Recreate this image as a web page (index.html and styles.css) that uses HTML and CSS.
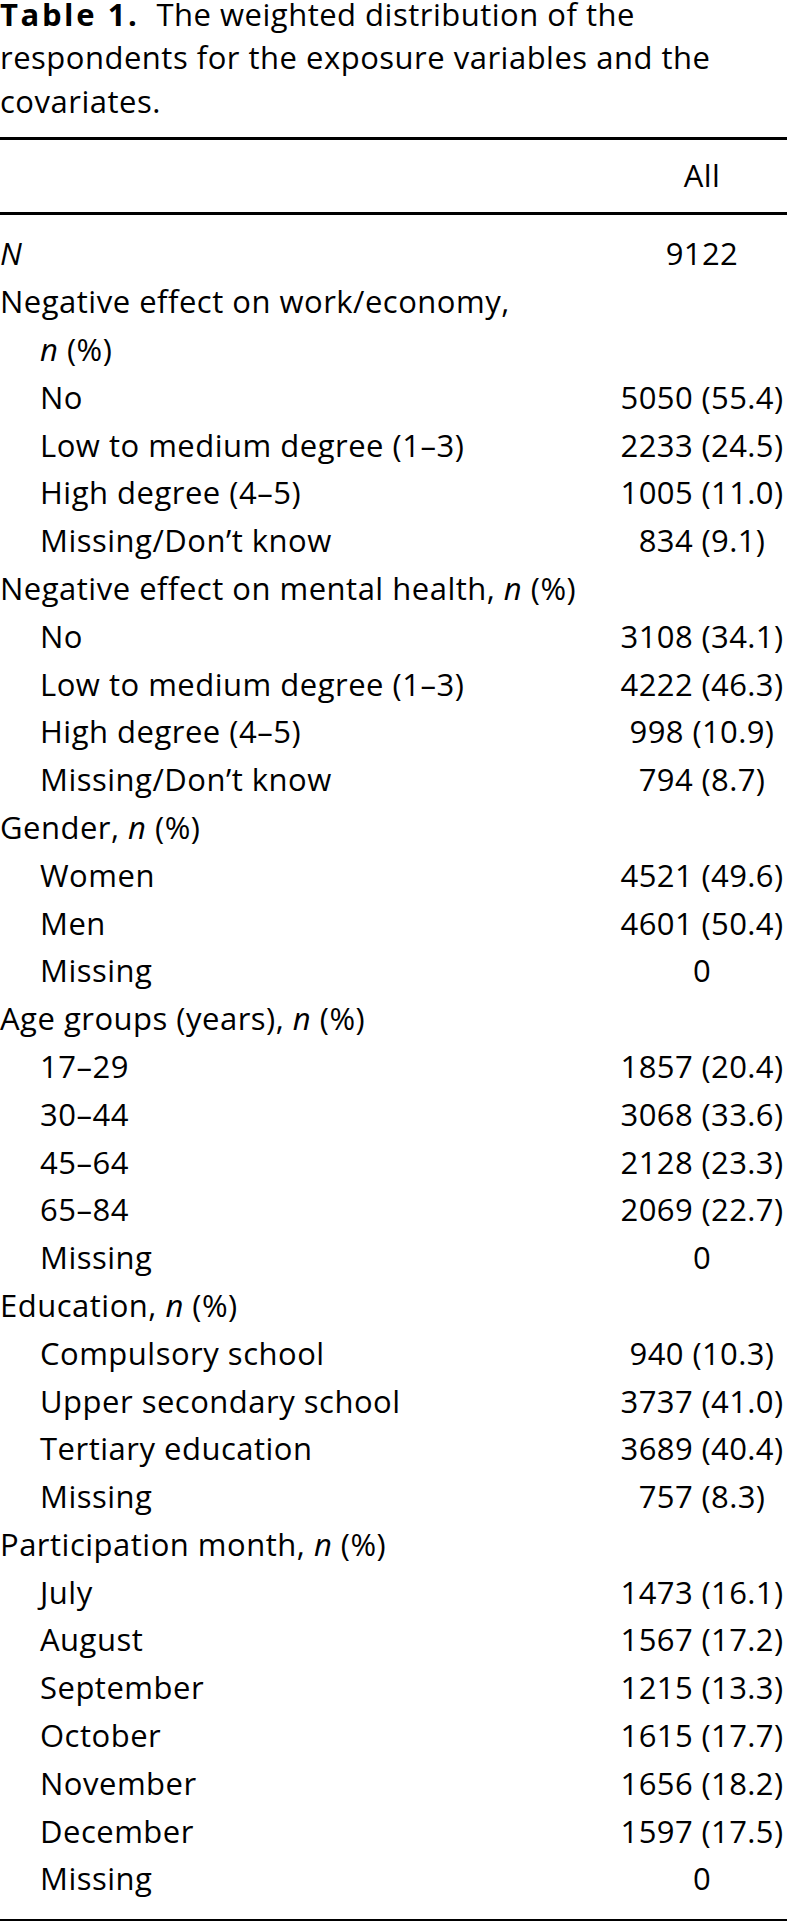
FILE: index.html
```html
<!DOCTYPE html>
<html lang="en">
<head>
<meta charset="utf-8">
<title>Table 1</title>
<link rel="stylesheet" href="styles.css">
</head>
<body>
<div class="page">
  <p class="caption"><span class="caption-label">Table 1.</span>The weighted distribution of the<br>respondents for the exposure variables and the<br>covariates.</p>
  <div class="table">
    <div class="thead">
      <div class="row"><div class="label"></div><div class="value">All</div></div>
    </div>
    <div class="tbody">
      <div class="row"><div class="label"><i>N</i></div><div class="value">9122</div></div>
      <div class="row"><div class="label hang">Negative effect on work/economy,<br><i>n</i> (%)</div><div class="value"></div></div>
      <div class="row"><div class="label sub">No</div><div class="value">5050 (55.4)</div></div>
      <div class="row"><div class="label sub">Low to medium degree (1–3)</div><div class="value">2233 (24.5)</div></div>
      <div class="row"><div class="label sub">High degree (4–5)</div><div class="value">1005 (11.0)</div></div>
      <div class="row"><div class="label sub">Missing/Don’t know</div><div class="value">834 (9.1)</div></div>
      <div class="row"><div class="label">Negative effect on mental health, <i>n</i> (%)</div><div class="value"></div></div>
      <div class="row"><div class="label sub">No</div><div class="value">3108 (34.1)</div></div>
      <div class="row"><div class="label sub">Low to medium degree (1–3)</div><div class="value">4222 (46.3)</div></div>
      <div class="row"><div class="label sub">High degree (4–5)</div><div class="value">998 (10.9)</div></div>
      <div class="row"><div class="label sub">Missing/Don’t know</div><div class="value">794 (8.7)</div></div>
      <div class="row"><div class="label">Gender, <i>n</i> (%)</div><div class="value"></div></div>
      <div class="row"><div class="label sub">Women</div><div class="value">4521 (49.6)</div></div>
      <div class="row"><div class="label sub">Men</div><div class="value">4601 (50.4)</div></div>
      <div class="row"><div class="label sub">Missing</div><div class="value">0</div></div>
      <div class="row"><div class="label">Age groups (years), <i>n</i> (%)</div><div class="value"></div></div>
      <div class="row"><div class="label sub">17–29</div><div class="value">1857 (20.4)</div></div>
      <div class="row"><div class="label sub">30–44</div><div class="value">3068 (33.6)</div></div>
      <div class="row"><div class="label sub">45–64</div><div class="value">2128 (23.3)</div></div>
      <div class="row"><div class="label sub">65–84</div><div class="value">2069 (22.7)</div></div>
      <div class="row"><div class="label sub">Missing</div><div class="value">0</div></div>
      <div class="row"><div class="label">Education, <i>n</i> (%)</div><div class="value"></div></div>
      <div class="row"><div class="label sub">Compulsory school</div><div class="value">940 (10.3)</div></div>
      <div class="row"><div class="label sub">Upper secondary school</div><div class="value">3737 (41.0)</div></div>
      <div class="row"><div class="label sub">Tertiary education</div><div class="value">3689 (40.4)</div></div>
      <div class="row"><div class="label sub">Missing</div><div class="value">757 (8.3)</div></div>
      <div class="row"><div class="label">Participation month, <i>n</i> (%)</div><div class="value"></div></div>
      <div class="row"><div class="label sub">July</div><div class="value">1473 (16.1)</div></div>
      <div class="row"><div class="label sub">August</div><div class="value">1567 (17.2)</div></div>
      <div class="row"><div class="label sub">September</div><div class="value">1215 (13.3)</div></div>
      <div class="row"><div class="label sub">October</div><div class="value">1615 (17.7)</div></div>
      <div class="row"><div class="label sub">November</div><div class="value">1656 (18.2)</div></div>
      <div class="row"><div class="label sub">December</div><div class="value">1597 (17.5)</div></div>
      <div class="row"><div class="label sub">Missing</div><div class="value">0</div></div>
    </div>
  </div>
</div>
</body>
</html>
```

FILE: styles.css
```css
html, body {
  margin: 0;
  padding: 0;
  background: #ffffff;
  overflow-x: hidden;
}

.page {
  width: 787px;
  font-family: "Open Sans", Lato, "Liberation Sans", sans-serif;
  font-size: 31px;
  letter-spacing: 0.5px;
  color: #000000;
}

.caption {
  margin: -7.5px 0 13.5px 0;
  line-height: 43.5px;
}

.caption-label {
  font-weight: 700;
  letter-spacing: 2.6px;
  margin-right: 17px;
}

.table {
  border-top: 3px solid #000;
  border-bottom: 3px solid #000;
}

.thead {
  padding: 12.1px 0 12.9px 0;
  border-bottom: 3px solid #000;
}

.tbody {
  padding: 15.1px 0 15.4px 0;
}

.row {
  display: grid;
  grid-template-columns: 1fr 170px;
  line-height: 47.8px;
}

.label {
  white-space: nowrap;
}

.label.sub {
  padding-left: 40px;
}

.label.hang {
  padding-left: 40px;
  text-indent: -40px;
}

.value {
  display: flex;
  justify-content: center;
  white-space: nowrap;
  letter-spacing: 0.4px;
}
```
